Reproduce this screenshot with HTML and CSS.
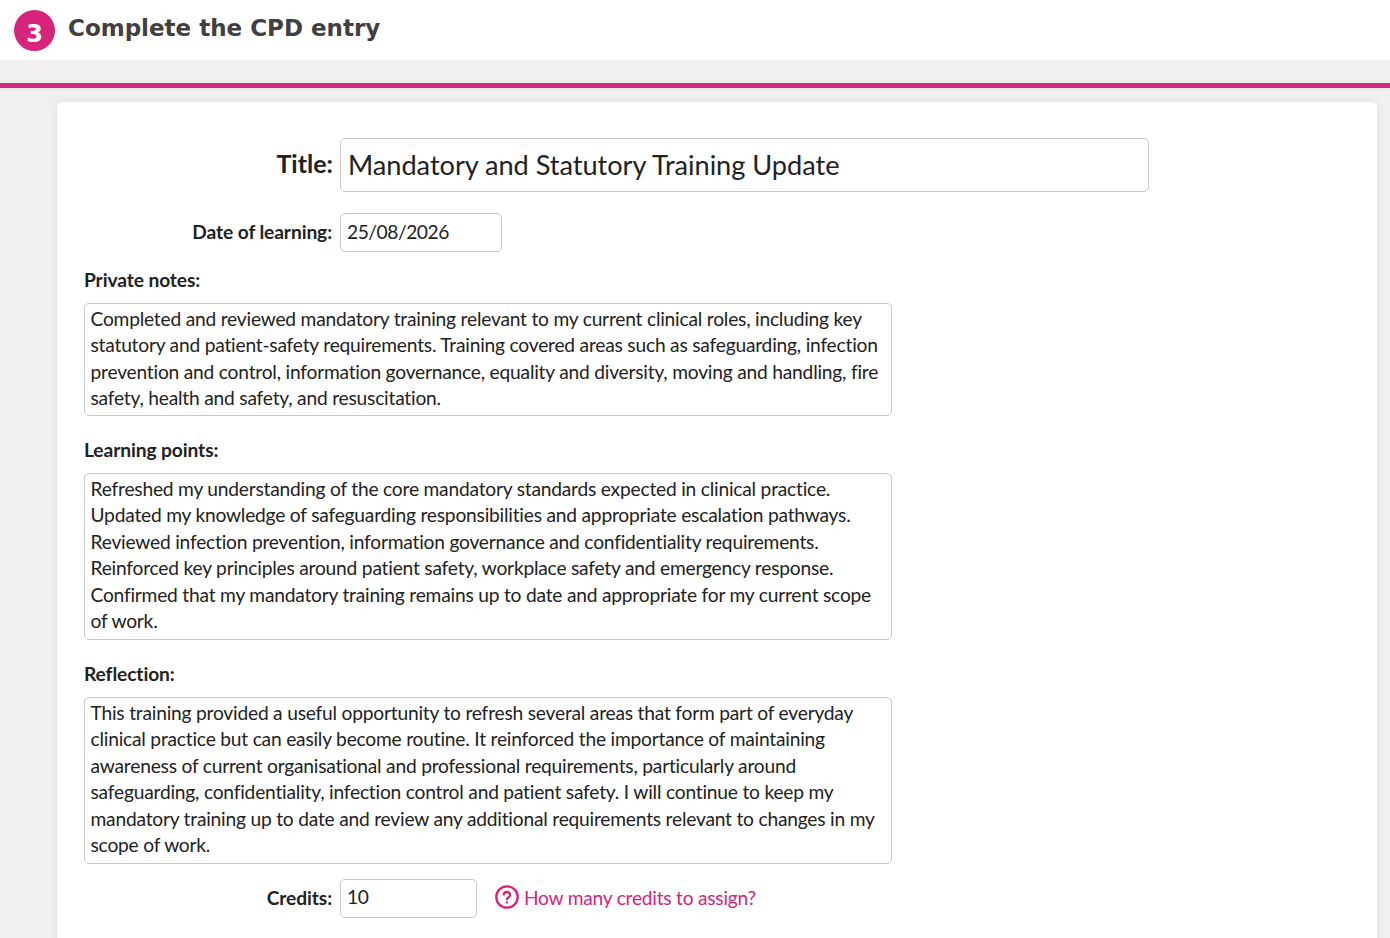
FILE: index.html
```html
<!DOCTYPE html>
<html>
<head>
	<title>Complete the CPD entry</title>
	<link rel="stylesheet" href="styles.css">
</head>
<body>
	<div class="step-header">
		<span class="step-number">3</span>
		<h2>Complete the CPD entry</h2>
	</div>
	<div class="pink-rule"></div>
	<div class="card">
		<form>
			<div class="form-row title-row">
				<label for="title">Title:</label>
				<input type="text" id="title" value="Mandatory and Statutory Training Update">
			</div>
			<div class="form-row date-row">
				<label for="date">Date of learning:</label>
				<input type="text" id="date" value="25/08/2026">
			</div>
			<div class="form-group first-group">
				<label for="notes">Private notes:</label>
				<textarea id="notes" class="rows-4">Completed and reviewed mandatory training relevant to my current clinical roles, including key statutory and patient-safety requirements. Training covered areas such as safeguarding, infection prevention and control, information governance, equality and diversity, moving and handling, fire safety, health and safety, and resuscitation.</textarea>
			</div>
			<div class="form-group">
				<label for="points">Learning points:</label>
				<textarea id="points" class="rows-6">Refreshed my understanding of the core mandatory standards expected in clinical practice.
Updated my knowledge of safeguarding responsibilities and appropriate escalation pathways.
Reviewed infection prevention, information governance and confidentiality requirements.
Reinforced key principles around patient safety, workplace safety and emergency response.
Confirmed that my mandatory training remains up to date and appropriate for my current scope of work.</textarea>
			</div>
			<div class="form-group">
				<label for="reflection">Reflection:</label>
				<textarea id="reflection" class="rows-6">This training provided a useful opportunity to refresh several areas that form part of everyday clinical practice but can easily become routine. It reinforced the importance of maintaining awareness of current organisational and professional requirements, particularly around safeguarding, confidentiality, infection control and patient safety. I will continue to keep my mandatory training up to date and review any additional requirements relevant to changes in my scope of work.</textarea>
			</div>
			<div class="form-row credits-row">
				<label for="credits">Credits:</label>
				<input type="text" id="credits" value="10">
				<a class="help-link" href="#">
					<svg width="24" height="24" viewBox="0 0 24 24" fill="none" stroke="#d6247c" stroke-width="2.3" stroke-linecap="round">
						<circle cx="12" cy="12" r="10.7"/>
						<path d="M8.8 9.4a3.2 3.2 0 0 1 6.3.6c0 2.1-3.1 2.5-3.1 4.3"/>
						<path d="M12 17.4v.1"/>
					</svg>
					How many credits to assign?
				</a>
			</div>
		</form>
	</div>
</body>
</html>
```
FILE: styles.css
```css
html, body {
	height: 938px;
	overflow: hidden;
}

body {
	margin: 0;
	background-color: #f1f0ee;
	font-family: "Lato", sans-serif;
	font-size: 19.2px;
	color: #222;
}

.step-header {
	display: flex;
	align-items: flex-start;
	height: 60px;
	padding-left: 14px;
	background-color: #fff;
}

.step-number {
	width: 41px;
	height: 41px;
	margin-top: 10px;
	border-radius: 50%;
	background-color: #d6247c;
	color: #fff;
	font-family: "DejaVu Sans", sans-serif;
	font-size: 24px;
	font-weight: bold;
	line-height: 48px;
	text-align: center;
}

.step-header h2 {
	margin: 12px 0 0 13px;
	font-family: "DejaVu Sans", sans-serif;
	font-size: 23px;
	font-weight: bold;
	line-height: 32px;
	color: #404040;
}

.pink-rule {
	height: 5px;
	margin-top: 23px;
	background-color: #d12a7e;
	box-shadow: 0 1px 4px rgba(0, 0, 0, 0.06);
}

.card {
	width: 1320px;
	height: 900px;
	margin: 14px 0 0 57px;
	padding: 36px 27px 0;
	box-sizing: border-box;
	background-color: #fff;
	border-radius: 5px;
	box-shadow: 0 0 10px rgba(0, 0, 0, 0.08);
}

label {
	font-weight: bold;
	letter-spacing: -0.1px;
}

input,
textarea {
	box-sizing: border-box;
	border: 1px solid #c8c8c8;
	border-radius: 5px;
	font-family: "Lato", sans-serif;
	font-size: 19.2px;
	color: #222;
	outline: none;
}

.form-row {
	display: flex;
	align-items: center;
}

.form-row label {
	flex: none;
	width: 248px;
	margin-right: 8px;
	padding-bottom: 2px;
	text-align: right;
}

.title-row input {
	width: 809px;
	height: 54px;
	padding: 0 7px 1px;
	font-size: 27.2px;
	letter-spacing: -0.04px;
}

.title-row label {
	margin-right: 7px;
	padding-bottom: 4px;
	padding-left: 1px;
	font-size: 25px;
	letter-spacing: 0;
}

.date-row {
	margin-top: 21px;
}

.date-row input {
	width: 162px;
	height: 39px;
	padding: 0 6px 2px;
	letter-spacing: -0.45px;
}

.form-group {
	margin-top: 22px;
}

.first-group {
	margin-top: 16px;
}

.form-group label {
	display: block;
	height: 35px;
}

textarea {
	display: block;
	width: 808px;
	padding: 2px 6px 3px 5.5px;
	line-height: 26.4px;
	letter-spacing: -0.21px;
	resize: none;
	overflow: hidden;
}

.rows-4 {
	height: 113px;
}

.rows-6 {
	height: 167px;
}

.credits-row {
	margin-top: 15px;
}

.credits-row label {
	padding-bottom: 3px;
}

.credits-row input {
	width: 137px;
	height: 39px;
	padding: 0 6px 4px;
	letter-spacing: -0.3px;
}

.help-link {
	display: flex;
	align-items: center;
	gap: 5px;
	margin: 0 0 3px 18px;
	color: #d6247c;
	text-decoration: none;
	letter-spacing: -0.24px;
}
```
